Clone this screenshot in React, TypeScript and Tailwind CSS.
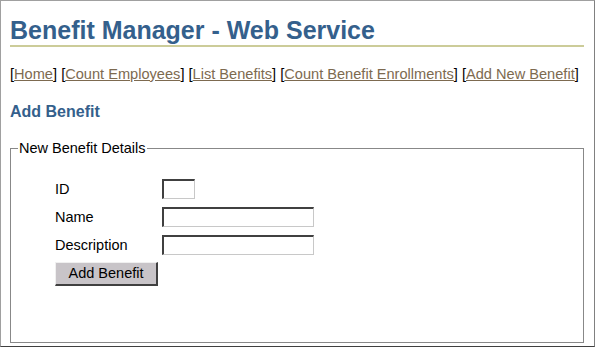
const navLinks = ['Home', 'Count Employees', 'List Benefits', 'Count Benefit Enrollments', 'Add New Benefit'];

const fields = [
  { label: 'ID', width: 'w-[33px]' },
  { label: 'Name', width: 'w-[152px]' },
  { label: 'Description', width: 'w-[152px]' },
];

const App = () => {
  return (
    <div
      className="w-[595px] h-[347px] overflow-hidden bg-white border-l border-t border-[#a0a0a0] border-r-[#808080] border-b-[#404040] border-r border-b"
      style={{ fontFamily: '"Liberation Sans", Arial, sans-serif' }}
    >
      <div className="pl-[9px] pr-[10px]">
        <h1 className="mt-[15px] pb-[1px] text-[25px] leading-[28px] font-bold text-[#34608c] border-b-2 border-[#cccc99]">
          Benefit Manager - Web Service
        </h1>

        <p className="mt-[19px] text-[14.6px] leading-[17px] text-black whitespace-nowrap">
          {navLinks.map((link, i) => (
            <span key={link}>
              {i > 0 && ' '}[<a href="#" className="text-[#7d6a50] underline">{link}</a>]
            </span>
          ))}
        </p>

        <h3 className="mt-[19px] text-[16px] leading-[19px] font-bold text-[#34608c]">Add Benefit</h3>

        <fieldset className="mt-[19px] w-[574px] h-[203px] border border-[#888888]">
          <legend className="ml-[7px] px-[1px] text-[14.5px] leading-[17px] text-black">New Benefit Details</legend>

          <div className="ml-[44px] mt-[22px] grid grid-cols-[107px_auto] gap-y-[8px] items-center text-[14.5px] leading-[17px] text-black">
            {fields.map((f) => (
              <div key={f.label} className="contents">
                <label>{f.label}</label>
                <input
                  type="text"
                  className={`${f.width} h-[20px] bg-white border-t-2 border-l-2 border-r border-b border-t-[#404040] border-l-[#404040] border-r-[#c8c8c8] border-b-[#c8c8c8] outline-none`}
                />
              </div>
            ))}
          </div>

          <button className="ml-[44px] mt-[7px] w-[103px] h-[24px] bg-[#c8c4c8] border-t border-l border-r-2 border-b-2 border-t-[#f0f0f0] border-l-[#f0f0f0] border-r-[#404040] border-b-[#404040] text-[14.5px] leading-[17px] text-black">
            Add Benefit
          </button>
        </fieldset>
      </div>
    </div>
  );
};

export default App;
